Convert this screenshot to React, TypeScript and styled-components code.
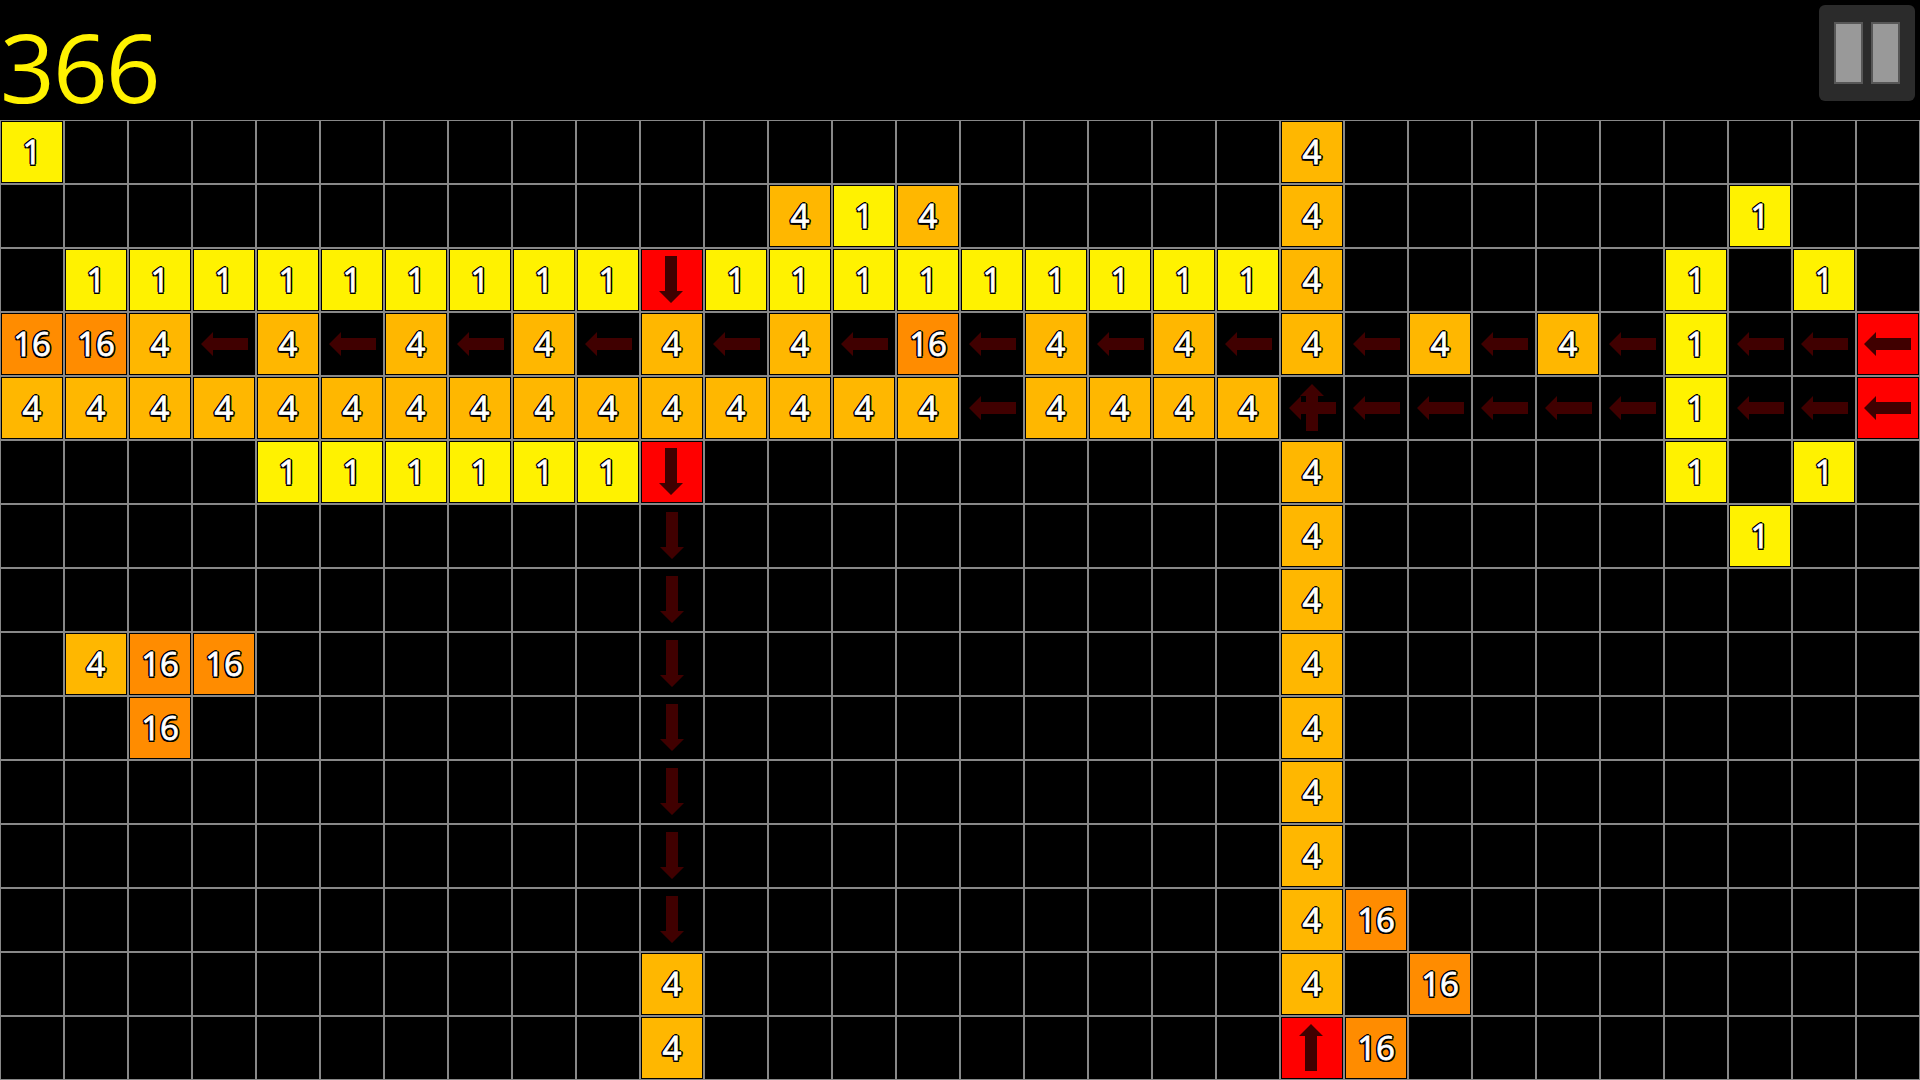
import * as React from "react";
import styled, { createGlobalStyle } from "styled-components";

const GlobalStyle = createGlobalStyle`
  html, body {
    margin: 0;
    background: #000;
    overflow: hidden;
  }
`;

const Screen = styled.div`
  width: 1920px;
  height: 1080px;
  background: #000;
  display: flex;
  flex-direction: column;
`;

const TopBar = styled.div`
  height: 120px;
  display: flex;
  justify-content: space-between;
  align-items: flex-start;
`;

const Score = styled.div`
  font-family: "Open Sans", sans-serif;
  font-size: 96px;
  line-height: 132px;
  letter-spacing: -2px;
  color: #fff200;
`;

const PauseButton = styled.div`
  width: 96px;
  height: 96px;
  margin: 5px 5px 0 0;
  background: #2b2b2b;
  border-radius: 6px;
  display: flex;
  justify-content: center;
  align-items: center;
  gap: 8px;
`;

const PauseBar = styled.div`
  width: 29px;
  height: 62px;
  box-sizing: border-box;
  background: #999;
  border: 2px solid #575757;
`;

const Board = styled.div`
  display: grid;
  grid-template-columns: repeat(30, 64px);
  grid-auto-rows: 64px;
`;

const Cell = styled.div`
  box-sizing: border-box;
  border: 1px solid #888;
  padding: 1px;
`;

const tileColors = {
  none: "transparent",
  one: "#fff200",
  four: "#ffb700",
  sixteen: "#ff8c00",
  red: "#ff0000",
};

type TileKind = keyof typeof tileColors;

const Tile = styled.div<{ $kind: TileKind }>`
  width: 60px;
  height: 60px;
  display: flex;
  justify-content: center;
  align-items: center;
  background: ${(p) => tileColors[p.$kind]};
`;

const TileNumber = styled.span`
  font-family: "Open Sans", sans-serif;
  font-size: 33px;
  line-height: 60px;
  color: #fff;
  -webkit-text-stroke: 0.8px #fff;
  text-shadow:
    -2px 0 0 #000,
    2px 0 0 #000,
    0 -2px 0 #000,
    0 2px 0 #000,
    -1.5px -1.5px 0 #000,
    1.5px -1.5px 0 #000,
    -1.5px 1.5px 0 #000,
    1.5px 1.5px 0 #000;
`;

const ArrowIcon = styled.svg`
  display: block;
  width: 60px;
  height: 60px;
  fill: #400000;
`;

// points are in board cell coordinates, the tile starts at 2,2
const arrows = {
  left: "9,32 21,20 21,26 56,26 56,38 21,38 21,44",
  leftRed: "8,32 20,20 20,26 55,26 55,38 20,38 20,44",
  down: "26,8 38,8 38,43 44,43 32,55 20,43 26,43",
  downRed: "25,8 37,8 37,43 43,43 31,55 19,43 25,43",
  upRed: "31,8 43,20 37,20 37,55 25,55 25,20 19,20",
  up: "32,8 44,20 38,20 38,55 26,55 26,20 20,20",
};

type ArrowName = keyof typeof arrows;

const Arrows = ({ names }: { names: ArrowName[] }) => (
  <ArrowIcon viewBox="2 2 60 60">
    {names.map((name) => (
      <polygon key={name} points={arrows[name]} />
    ))}
  </ArrowIcon>
);

const rows = [
  "a...................b.........",
  "............bab.....b......a..",
  ".aaaaaaaaaDaaaaaaaaab.....a.a.",
  "ccb" + "lblblblblbl" + "c" + "lblblblblbl" + "allL",
  "bbbbbbbbbbbbbbblbbbbxlllllallL",
  "....aaaaaaD.........b.....a.a.",
  "..........d.........b......a..",
  "..........d.........b.........",
  ".bcc......d.........b.........",
  "..c.......d.........b.........",
  "..........d.........b.........",
  "..........d.........b.........",
  "..........d.........bc........",
  "..........b.........b.c.......",
  "..........b.........Uc........",
];

const tiles: Record<string, { kind: TileKind; text?: string; arrows?: ArrowName[] }> = {
  a: { kind: "one", text: "1" },
  b: { kind: "four", text: "4" },
  c: { kind: "sixteen", text: "16" },
  l: { kind: "none", arrows: ["left"] },
  d: { kind: "none", arrows: ["down"] },
  x: { kind: "none", arrows: ["left", "up"] },
  L: { kind: "red", arrows: ["leftRed"] },
  D: { kind: "red", arrows: ["downRed"] },
  U: { kind: "red", arrows: ["upRed"] },
};

const BoardTile = ({ code }: { code: string }) => {
  const tile = tiles[code];
  if (!tile) return null;
  return (
    <Tile $kind={tile.kind}>
      {tile.text && <TileNumber>{tile.text}</TileNumber>}
      {tile.arrows && <Arrows names={tile.arrows} />}
    </Tile>
  );
};

const App = () => (
  <Screen>
    <GlobalStyle />
    <TopBar>
      <Score>366</Score>
      <PauseButton>
        <PauseBar />
        <PauseBar />
      </PauseButton>
    </TopBar>
    <Board>
      {rows.map((row, y) =>
        row.split("").map((code, x) => (
          <Cell key={`${x}-${y}`}>
            <BoardTile code={code} />
          </Cell>
        ))
      )}
    </Board>
  </Screen>
);

export default App;
